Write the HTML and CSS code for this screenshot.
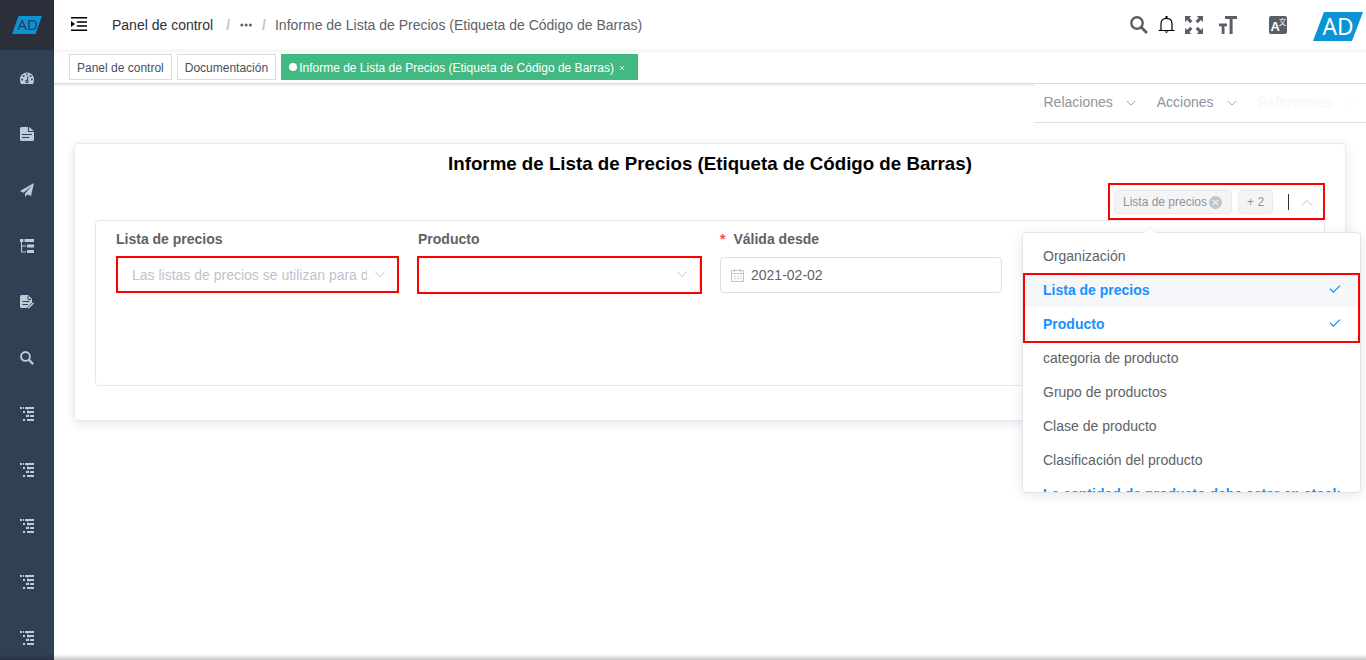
FILE: index.html
```html
<!DOCTYPE html>
<html lang="es">
<head>
<meta charset="utf-8">
<title>Informe de Lista de Precios</title>
<link rel="stylesheet" href="styles.css">
</head>
<body>
<svg width="0" height="0" class="defs">
  <defs>
    <symbol id="down" viewBox="0 0 12 12"><path d="M1 3.500l5 5 5-5" fill="none" stroke="currentColor"/></symbol>
    <symbol id="check" viewBox="0 0 12 12"><path d="M1 5.800l3.400 3.400L11 2.600" fill="none" stroke="currentColor" stroke-width="1.300"/></symbol>
    <symbol id="search" viewBox="0 0 18 18"><circle cx="7" cy="7" r="5.700" fill="none" stroke="currentColor" stroke-width="2.400"/><path d="M11.300 11.300l5.600 5.600" stroke="currentColor" stroke-width="2.800"/></symbol>
    <symbol id="nested" viewBox="0 0 14 14"><path d="M0 0h2v2H0zM3 0h1v2H3zM5 0h9v2H5zM3 4h2v2H3zM7 4h7v2H7zM6 8h3v2H6zM10 8h4v2h-4zM3 12h2v2H3zM7 12h7v2H7z" fill="currentColor"/><path d="M7 2l1.500 2M9.500 6l-2 2" stroke="currentColor" opacity=".6"/></symbol>
  </defs>
</svg>
<div class="app">
  <aside class="sidebar">
    <div class="brand"><svg width="30" height="18" viewBox="0 0 30 18"><path d="M6.500 0H30l-6.500 18H0z" fill="#0b93d8"/><text x="5.500" y="14" class="brand-text">AD</text></svg></div>
    <nav class="side-nav">
      <a class="side-item"><svg width="14" height="14" viewBox="0 0 14 14"><path d="M0 8.300a7 6.800 0 0 1 14 0q0 2.500-1 4.700H1Q0 10.800 0 8.300z" fill="currentColor"/><path d="M6.800 11.500L8 5.500" stroke="#304156" stroke-width="1.200"/><g fill="#304156"><circle cx="7" cy="10.500" r="1.700"/><circle cx="2.200" cy="8.500" r="1"/><circle cx="3.700" cy="5" r="1"/><circle cx="7" cy="3.300" r=".9"/><circle cx="10.600" cy="5" r="1"/><circle cx="11.900" cy="8.500" r="1"/></g><circle cx="7" cy="10.500" r=".7" fill="currentColor"/></svg></a>
      <a class="side-item"><svg width="14" height="14" viewBox="0 0 14 14"><path d="M1.500 0H8v5h6v7.500q0 1.500-1.500 1.500h-11Q0 14 0 12.500v-11Q0 0 1.500 0zM9 0l5 4H9z" fill="currentColor"/><path d="M2 7.500h10M2 10.500h7" stroke="#304156"/></svg></a>
      <a class="side-item"><svg width="14" height="14" viewBox="0 0 14 14"><path d="M14 0L0 8l3.500 1.700L12 2.500 5 10.400V14l2.300-2.500 3.700 1.600z" fill="currentColor"/></svg></a>
      <a class="side-item"><svg width="14" height="14" viewBox="0 0 14 14"><path d="M0 0h3.400v3H0zM4.500 0H14v3H4.500zM7 5.500h7v3H7zM7 11h7v3H7z" fill="currentColor"/><path d="M1.500 3v10H6M1.500 7H6" fill="none" stroke="currentColor"/></svg></a>
      <a class="side-item"><svg width="14" height="14" viewBox="0 0 14 14"><path d="M1.500 0H8l4 4v3.500L6.500 13h-5Q0 13 0 11.500v-10Q0 0 1.500 0z" fill="currentColor"/><path d="M8 1v3.500h3M2.500 6.500h7M2.500 9.500h5.500" stroke="#304156" fill="none"/><path d="M8 13.300l5.500-5.300" stroke="currentColor" stroke-width="1.500"/></svg></a>
      <a class="side-item"><svg width="14" height="14"><use href="#search"/></svg></a>
      <a class="side-item"><svg width="14" height="14"><use href="#nested"/></svg></a>
      <a class="side-item"><svg width="14" height="14"><use href="#nested"/></svg></a>
      <a class="side-item"><svg width="14" height="14"><use href="#nested"/></svg></a>
      <a class="side-item"><svg width="14" height="14"><use href="#nested"/></svg></a>
      <a class="side-item"><svg width="14" height="14"><use href="#nested"/></svg></a>
    </nav>
  </aside>

  <main class="main">
    <header class="navbar">
      <svg class="burger" width="16" height="14" viewBox="0 0 16 14"><path d="M0 .75h16M6 5h10M6 9h10M0 13.250h16" stroke="#000" stroke-width="1.400"/><path d="M0 4l4 3-4 3z"/></svg>
      <div class="crumbs">
        <span class="crumb-home">Panel de control</span><span class="slash first">/</span>
        <svg class="dots" width="12" height="4" viewBox="0 0 12 4" fill="#5a5e66"><circle cx="1.800" cy="2" r="1.500"/><circle cx="6.100" cy="2" r="1.500"/><circle cx="10.400" cy="2" r="1.500"/></svg>
        <span class="slash">/</span><span class="crumb-last">Informe de Lista de Precios (Etiqueta de Código de Barras)</span>
      </div>
      <div class="tools">
        <svg class="tool-search" width="18" height="18"><use href="#search"/></svg>
        <svg class="tool-bell" width="17" height="18" viewBox="0 0 17 18"><path d="M.5 14.500h16M3 14.500V8q0-5.600 5.500-5.600T14 8v6.500" fill="none" stroke="#000" stroke-width="1.200"/><path d="M7.500 0h2v2.500h-2zM6.500 15.500h4l-2 1.600z"/></svg>
        <svg class="tool-full" width="18" height="18" viewBox="0 0 18 18"><g id="arrow"><path d="M0 0h6.300L4.400 1.900l3 3-2.200 2.300-3.200-3.100L0 6.300z" fill="#5a5e66"/></g><use href="#arrow" transform="matrix(-1 0 0 1 18 0)"/><use href="#arrow" transform="matrix(1 0 0 -1 0 18)"/><use href="#arrow" transform="rotate(180 9 9)"/></svg>
        <svg class="tool-size" width="18" height="18" viewBox="0 0 18 18"><path d="M6 0h12v3h-4.400v15h-3V3H6zM0 7.500h8v2.700H5.500V18H2.700v-7.800H0z" fill="#5a5e66"/></svg>
        <svg class="tool-lang" width="18" height="18" viewBox="0 0 18 18"><rect width="18" height="18" rx="2" fill="#5a5e66"/><text x="1.500" y="14.500" class="lang-a">A</text><text x="9.700" y="9.300" class="lang-cjk">文</text></svg>
        <svg class="tool-logo" width="50" height="29" viewBox="0 0 50 29"><path d="M11 0h39L39 29H0z" fill="#0b93d8"/><text x="9.500" y="22.500" class="logo-text" textLength="31" lengthAdjust="spacingAndGlyphs">AD</text></svg>
      </div>
    </header>
    <div class="tags">
      <span class="tag">Panel de control</span><span class="tag">Documentación</span><span class="tag active"><i class="dot"></i>Informe de Lista de Precios (Etiqueta de Código de Barras)<svg class="close" width="6" height="6" viewBox="0 0 6 6"><path d="M1 1l4 4M5 1L1 5" stroke="#d5efe3" stroke-width=".9"/></svg></span>
    </div>
    <div class="context">
      <span class="menu">Relaciones<svg width="10" height="12"><use href="#down"/></svg></span>
      <span class="menu">Acciones<svg width="10" height="12"><use href="#down"/></svg></span>
      <span class="menu disabled">Referencias<svg width="10" height="12"><use href="#down"/></svg></span>
    </div>
    <section class="card">
      <h3 class="title">Informe de Lista de Precios (Etiqueta de Código de Barras)</h3>
      <div class="picker-row">
        <div class="picker">
          <span class="chip">Lista de precios<svg width="13" height="13" viewBox="0 0 12 12"><circle cx="6" cy="6" r="6" fill="#c0c4cc"/><path d="M3.500 3.500l5 5M8.500 3.500l-5 5" stroke="#f4f4f5"/></svg></span>
          <span class="chip">+ 2</span>
          <i class="caret"></i>
          <svg class="up" width="12" height="12"><use href="#down"/></svg>
          <div class="dropdown">
            <svg class="tip" width="12" height="7" viewBox="0 0 12 7"><path d="M0 6.500L6 .5l6 6V7H0z" fill="#fff"/><path d="M0 6l6-5.500L12 6" fill="none" stroke="#e9edf4"/></svg>
            <ul class="options">
              <li class="option">Organización</li>
              <li class="option picked hover">Lista de precios<svg width="12" height="12"><use href="#check"/></svg></li>
              <li class="option picked">Producto<svg width="12" height="12"><use href="#check"/></svg></li>
              <li class="option">categoria de producto</li>
              <li class="option">Grupo de productos</li>
              <li class="option">Clase de producto</li>
              <li class="option">Clasificación del producto</li>
              <li class="option picked"><span class="clip">La cantidad de producto debe estar en stock?</span></li>
            </ul>
            <i class="mark mark-options"></i>
          </div>
          <i class="mark mark-picker"></i>
        </div>
      </div>
      <div class="fields">
        <div class="field"><label class="label">Lista de precios</label><div class="input"><span class="placeholder">Las listas de precios se utilizan para determinar</span><svg width="12" height="12"><use href="#down"/></svg><i class="mark mark-list"></i></div></div>
        <div class="field"><label class="label">Producto</label><div class="input"><span class="placeholder"></span><svg width="12" height="12"><use href="#down"/></svg><i class="mark mark-product"></i></div></div>
        <div class="field"><label class="label"><b class="star">*</b>Válida desde</label><div class="input date"><svg width="13" height="13" viewBox="0 0 13 13" fill="none" stroke="#c0c4cc"><path d="M.5 1.500h12v11H.5zM.5 4.500h12M3.500 0v3M9.500 0v3"/><path d="M3 7.500h7.500M3 9.500h7.500" stroke-dasharray="2 1" opacity=".8"/></svg><span>2021-02-02</span></div></div>
      </div>
    </section>
  </main>
</div>
<i class="fade"></i>
</body>
</html>
```
FILE: styles.css
```css
* { box-sizing: border-box; }
body { margin: 0; height: 660px; overflow: hidden; background: #fff; font-family: "Liberation Sans", Arial, sans-serif; font-size: 14px; color: #606266; }
svg { display: block; flex: none; }
.defs { position: absolute; }
.app { display: flex; height: 660px; }
.sidebar { width: 54px; flex: none; background: #304156; }
.brand { height: 50px; background: #2b2f3a; padding: 16px 0 0 12px; }
.brand svg, .tool-logo { overflow: visible; }
.brand-text { font: 15px "Noto Sans", sans-serif; fill: #2b3e52; }
.side-item { height: 56px; display: flex; align-items: center; justify-content: center; color: #bfcbd9; }
.main { flex: 1; min-width: 0; display: flex; flex-direction: column; }

.navbar { height: 50px; flex: none; display: flex; padding-left: 17px; box-shadow: 0 1px 4px rgba(0,21,41,.08); }
.burger { margin-top: 17px; }
.crumbs { display: flex; align-items: center; margin-left: 25px; flex: 1; }
.crumb-home { color: #303133; }
.crumb-last { margin-left: 9px; }
.slash { color: #c0c4cc; font-weight: bold; }
.slash.first { margin: 0 10px 0 13px; }
.dots { margin-right: 10px; }
.tools { display: flex; padding-top: 16px; color: #5a5e66; padding-right: 3px; }
.tool-bell { margin-left: 10px; }
.tool-full { margin-left: 10px; }
.tool-size { margin-left: 16px; }
.tool-lang { margin-left: 32px; margin-right: 26px; }
.tool-logo { margin-top: -4px; }
.lang-a { font: bold 13px "Liberation Sans", sans-serif; fill: #fff; }
.lang-cjk { font: 7.5px "Noto Sans CJK SC", sans-serif; fill: #fff; }
.logo-text { font: 23px "Noto Sans", sans-serif; fill: #fff; }

.tags { height: 34px; flex: none; display: flex; gap: 5px; padding: 4px 0 0 15px; border-bottom: 1px solid #d8dce5; box-shadow: 0 1px 3px rgba(0,0,0,.12); }
.tag { height: 26px; line-height: 26px; border: 1px solid #d8dce5; padding: 0 7px; font-size: 12px; color: #495060; white-space: nowrap; }
.tag.active { display: flex; background: #42b983; border-color: #42b983; color: #fff; width: 357px; }
.dot { width: 8px; height: 8px; border-radius: 50%; background: #fff; margin: 8px 2px 0 0; }
.close { margin: 10px 0 0 5px; }

.context { position: relative; align-self: flex-end; width: 332px; height: 39px; flex: none; display: flex; padding-left: 9.500px; background: #fff; border-bottom: 1px solid #dfe1e5; line-height: 36px; color: #909399; }
.menu { height: 36px; display: flex; align-items: center; margin-right: 21px; }
.menu svg { margin: 2px 0 0 13px; }
.menu.disabled { color: #f5f5f7; margin: 0; }

.card { width: 1272px; height: 278px; margin: 20px 0 0 20px; padding: 0 20px; border: 1px solid #e6ebf5; border-radius: 4px; box-shadow: 0 2px 12px rgba(0,0,0,.1); }
.title { margin: 0; height: 39px; line-height: 39px; text-align: center; font-size: 18.72px; color: #000; }
.picker-row { height: 37px; display: flex; justify-content: flex-end; }
.picker { position: relative; width: 217px; display: flex; align-items: flex-start; padding: 7px 0 0 6px; }
.chip { height: 24px; display: flex; align-items: center; padding: 0 8px; border: 1px solid #e9e9eb; border-radius: 4px; background: #f4f4f5; font-size: 12px; color: #909399; margin-right: 6px; }
.chip svg { margin: 0 1px 0 2px; }
.caret { width: 1px; height: 16px; margin: 4px 0 0 9px; background: #333; }
.up { margin: 7px 0 0 12px; transform: rotate(180deg); color: #c0c4cc; }

.dropdown { position: absolute; left: -86px; top: 49px; z-index: 3; width: 339px; height: 261px; border: 1px solid #dfe4ed; border-radius: 4px; background: #fff; box-shadow: 0 2px 12px rgba(0,0,0,.1); }
.tip { position: absolute; left: 121px; top: -6px; }
.options { list-style: none; margin: 0; padding: 6px 0 0; height: 259px; overflow: hidden; }
.option { height: 34px; line-height: 34px; padding: 0 20px; display: flex; justify-content: space-between; }
.option svg { margin: 10px -1px 0 0; }
.picked { color: #1890ff; font-weight: bold; }
.hover { background: #f5f7fa; }
.clip { width: 298px; overflow: hidden; white-space: nowrap; }

.fields { height: 166px; display: flex; gap: 20px; padding: 0 20px; border: 1px solid #e6e6f5; border-radius: 4px; }
.field { width: 282px; flex: none; }
.label { display: block; height: 36px; line-height: 36px; font-weight: bold; }
.star { color: #ff4949; margin-right: 8px; }
.input { position: relative; height: 36px; display: flex; align-items: center; border: 1px solid #dcdfe6; border-radius: 4px; padding: 0 11px 0 15px; color: #c0c4cc; }
.input > svg { margin-top: -3px; }
.placeholder { width: 236px; margin-right: 7px; overflow: hidden; white-space: nowrap; }
.input.date { padding-left: 10px; gap: 7px; color: #606266; }
.input.date > svg { margin-top: 1px; }

.mark { position: absolute; border: 2px solid #f00; }
.mark-picker { left: 0; top: 0; width: 217px; height: 37px; }
.mark-options { left: 0; top: 40px; width: 337px; height: 70px; }
.mark-list { left: -1px; top: -2px; width: 283px; height: 37px; }
.mark-product { left: -2px; top: -2px; width: 285px; height: 38px; }
.fade { position: absolute; left: 0; top: 654px; width: 1366px; height: 6px; background: linear-gradient(transparent, rgba(0,0,0,.22)); }
```
